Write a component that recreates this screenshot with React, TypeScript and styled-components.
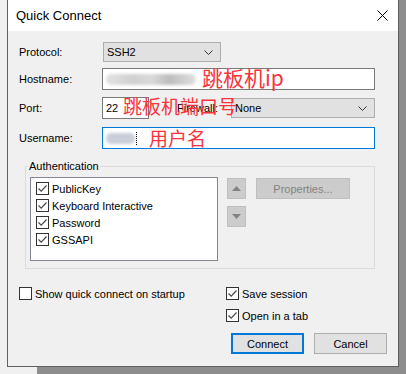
import React from "react";
import styled, { createGlobalStyle } from "styled-components";

const Global = createGlobalStyle`
  html, body { margin: 0; padding: 0; }
  body {
    width: 406px;
    height: 374px;
    overflow: hidden;
    background: linear-gradient(to right, #f0f0f0 0 37px, #8d8d8d 37px);
    font-family: "Liberation Sans", Arial, sans-serif;
    font-size: 11px;
    color: #000;
  }
  * { box-sizing: border-box; }
`;

const Page = styled.div`
  display: flex;
  padding-left: 7px;
`;

const Dialog = styled.div`
  width: 392px;
  height: 367px;
  border: 1px solid #5f5f5f;
  border-top: none;
  display: flex;
  flex-direction: column;
  background: #f0f0f0;
`;

const TitleBar = styled.div`
  height: 31px;
  background: #fff;
  display: flex;
  align-items: center;
  justify-content: space-between;
  padding: 0 10px 1px 8px;
  font-size: 13px;
`;

const Body = styled.div`
  flex: 1;
  padding: 11px 11px 0 11px;
  display: flex;
  flex-direction: column;
`;

const FieldRow = styled.div<{ $h: number; $mt: number }>`
  position: relative;
  display: flex;
  align-items: center;
  height: ${(p) => p.$h}px;
  margin-top: ${(p) => p.$mt}px;
`;

const Label = styled.span`
  width: 83px;
  flex: none;
`;

const Select = styled.div<{ $w: number; $ml?: number }>`
  width: ${(p) => p.$w}px;
  height: 20px;
  margin-left: ${(p) => p.$ml ?? 0}px;
  border: 1px solid #adadad;
  background: #e1e1e1;
  display: flex;
  align-items: center;
  justify-content: space-between;
  padding: 0 7px 0 3px;
  flex: none;
`;

const TextBox = styled.div<{ $w: number; $focus?: boolean }>`
  width: ${(p) => p.$w}px;
  height: 22px;
  border: 1px solid ${(p) => (p.$focus ? "#0078d7" : "#7a7a7a")};
  background: #fff;
  display: flex;
  align-items: center;
  padding-left: 3px;
  flex: none;
`;

const Blob = styled.span<{ $w: number; $bg: string }>`
  display: inline-block;
  width: ${(p) => p.$w}px;
  height: 11px;
  border-radius: 5px;
  background: ${(p) => p.$bg};
  filter: blur(1.6px);
`;

const Caret = styled.span`
  width: 1px;
  height: 13px;
  margin-left: 1px;
  background: repeating-linear-gradient(#000 0 1px, transparent 1px 2px);
`;

const SideLabel = styled.span`
  width: 54px;
  margin-left: 28px;
  flex: none;
`;

const Note = styled.span<{ $x: number; $y: number; $size: number }>`
  position: absolute;
  left: ${(p) => p.$x}px;
  top: ${(p) => p.$y}px;
  font-family: "Noto Sans CJK SC", "Noto Sans", sans-serif;
  font-size: ${(p) => p.$size}px;
  line-height: 1;
  color: #f7343c;
  white-space: nowrap;
  pointer-events: none;
`;

const GroupBox = styled.div`
  position: relative;
  margin: 17px 0 0 6px;
  width: 350px;
  height: 103px;
  border: 1px solid #dcdcdc;
  padding: 10px 0 0 4px;
  display: flex;
  align-items: flex-start;
`;

const GroupTitle = styled.span`
  position: absolute;
  left: 2px;
  top: -8px;
  padding: 0 1px;
  background: #f0f0f0;
  line-height: 14px;
`;

const ListBox = styled.div`
  width: 188px;
  height: 84px;
  border: 1px solid #828790;
  background: #fff;
  padding: 2px 0 0 5px;
  display: flex;
  flex-direction: column;
`;

const ListItem = styled.div`
  height: 17px;
  display: flex;
  align-items: center;
  gap: 3px;
`;

const Box = styled.span`
  width: 13px;
  height: 13px;
  border: 1px solid #333;
  background: #fff;
  display: inline-flex;
  align-items: center;
  justify-content: center;
  flex: none;
`;

const ArrowCol = styled.div`
  margin: 1px 0 0 9px;
  display: flex;
  flex-direction: column;
  gap: 7px;
`;

const DisabledBtn = styled.div<{ $w: number }>`
  width: ${(p) => p.$w}px;
  height: 21px;
  border: 1px solid #bfbfbf;
  background: #cccccc;
  color: #838383;
  display: flex;
  align-items: center;
  justify-content: center;
  flex: none;
`;

const PropsBtn = styled(DisabledBtn)`
  margin: 1px 0 0 10px;
`;

const Bottom = styled.div`
  margin-top: 18px;
  display: grid;
  grid-template-columns: 207px 1fr;
  row-gap: 9px;
`;

const CheckRow = styled.label`
  height: 13px;
  display: flex;
  align-items: center;
  gap: 3px;
  white-space: nowrap;
`;

const Buttons = styled.div`
  margin-top: 11px;
  display: flex;
  justify-content: flex-end;
  gap: 10px;
`;

const Button = styled.div<{ $primary?: boolean }>`
  width: 73px;
  height: 21px;
  background: #e1e1e1;
  border: ${(p) => (p.$primary ? "2px solid #0078d7" : "1px solid #adadad")};
  display: flex;
  align-items: center;
  justify-content: center;
`;

const Chevron = () => (
  <svg width="9" height="5" viewBox="0 0 9 5">
    <path d="M0.5 0.5 L4.5 4.5 L8.5 0.5" fill="none" stroke="#333" strokeWidth="1" />
  </svg>
);

const Check = ({ on }: { on: boolean }) => (
  <Box>
    {on && (
      <svg width="11" height="11" viewBox="0 0 11 11">
        <path d="M1.5 5.5 L4.2 8.2 L9.5 2.5" fill="none" stroke="#4a4a4a" strokeWidth="1.2" />
      </svg>
    )}
  </Box>
);

const Tri = ({ up }: { up: boolean }) => (
  <svg width="9" height="5" viewBox="0 0 9 5">
    <path d={up ? "M0 5 L4.5 0 L9 5 Z" : "M0 0 L4.5 5 L9 0 Z"} fill="#838383" />
  </svg>
);

export default function App() {
  const methods = ["PublicKey", "Keyboard Interactive", "Password", "GSSAPI"];
  return (
    <>
      <Global />
      <Page>
        <Dialog>
          <TitleBar>
            <span>Quick Connect</span>
            <svg width="11" height="11" viewBox="0 0 11 11">
              <path d="M0.5 0.5 L10.5 10.5 M10.5 0.5 L0.5 10.5" stroke="#000" strokeWidth="1" />
            </svg>
          </TitleBar>
          <Body>
            <FieldRow $h={20} $mt={0}>
              <Label>Protocol:</Label>
              <Select $w={118} $ml={1}>
                <span>SSH2</span>
                <Chevron />
              </Select>
            </FieldRow>
            <FieldRow $h={22} $mt={6}>
              <Label>Hostname:</Label>
              <TextBox $w={273}>
                <Blob $w={90} $bg="linear-gradient(to right, #e2e2e2, #d0d0d0 30%, #dadada 50%, #bdbdbd 70%, #e0e0e0)" />
              </TextBox>
              <Note $x={183} $y={-1} $size={21}>跳板机ip</Note>
            </FieldRow>
            <FieldRow $h={22} $mt={7}>
              <Label>Port:</Label>
              <TextBox $w={47}>22</TextBox>
              <SideLabel>Firewall:</SideLabel>
              <Select $w={144}>
                <span>None</span>
                <Chevron />
              </Select>
              <Note $x={104} $y={-1} $size={19}>跳板机端口号</Note>
            </FieldRow>
            <FieldRow $h={22} $mt={8}>
              <Label>Username:</Label>
              <TextBox $w={273} $focus>
                <Blob $w={29} $bg="#c9ced8" />
                <Caret />
              </TextBox>
              <Note $x={130} $y={1} $size={19}>用户名</Note>
            </FieldRow>

            <GroupBox>
              <GroupTitle>Authentication</GroupTitle>
              <ListBox>
                {methods.map((m) => (
                  <ListItem key={m}>
                    <Check on />
                    <span>{m}</span>
                  </ListItem>
                ))}
              </ListBox>
              <ArrowCol>
                <DisabledBtn $w={19}>
                  <Tri up />
                </DisabledBtn>
                <DisabledBtn $w={19}>
                  <Tri up={false} />
                </DisabledBtn>
              </ArrowCol>
              <PropsBtn $w={94}>Properties...</PropsBtn>
            </GroupBox>

            <Bottom>
              <CheckRow>
                <Check on={false} />
                <span>Show quick connect on startup</span>
              </CheckRow>
              <CheckRow>
                <Check on />
                <span>Save session</span>
              </CheckRow>
              <span />
              <CheckRow>
                <Check on />
                <span>Open in a tab</span>
              </CheckRow>
            </Bottom>
            <Buttons>
              <Button $primary>Connect</Button>
              <Button>Cancel</Button>
            </Buttons>
          </Body>
        </Dialog>
      </Page>
    </>
  );
}
